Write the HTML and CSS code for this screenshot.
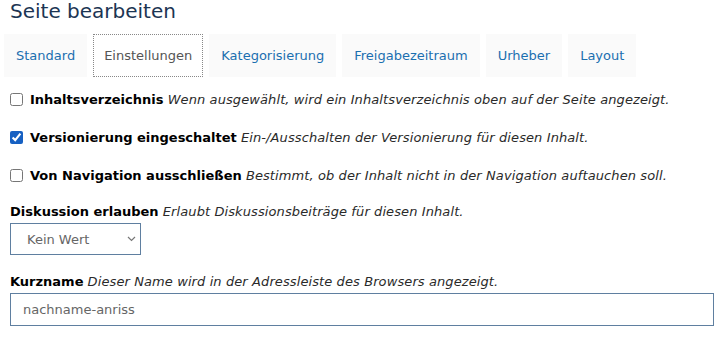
FILE: index.html
```html
<!DOCTYPE html>
<html lang="de">
<head>
  <meta charset="UTF-8">
  <title>Seite bearbeiten</title>
  <link rel="stylesheet" href="styles.css">
</head>
<body>
  <div class="page">
    <h1 class="title">Seite bearbeiten</h1>

    <nav class="tabs">
      <a class="tab" href="#">Standard</a>
      <a class="tab active" href="#">Einstellungen</a>
      <a class="tab" href="#">Kategorisierung</a>
      <a class="tab" href="#">Freigabezeitraum</a>
      <a class="tab" href="#">Urheber</a>
      <a class="tab" href="#">Layout</a>
    </nav>

    <form class="settings">
      <label class="check-row">
        <input type="checkbox">
        <span><b>Inhaltsverzeichnis</b> <i>Wenn ausgewählt, wird ein Inhaltsverzeichnis oben auf der Seite angezeigt.</i></span>
      </label>
      <label class="check-row">
        <input type="checkbox" checked>
        <span><b>Versionierung eingeschaltet</b> <i>Ein-/Ausschalten der Versionierung für diesen Inhalt.</i></span>
      </label>
      <label class="check-row">
        <input type="checkbox">
        <span><b>Von Navigation ausschließen</b> <i>Bestimmt, ob der Inhalt nicht in der Navigation auftauchen soll.</i></span>
      </label>

      <div class="field">
        <label for="discussion"><b>Diskussion erlauben</b> <i>Erlaubt Diskussionsbeiträge für diesen Inhalt.</i></label>
        <div class="select-wrap">
          <select id="discussion">
            <option>Kein Wert</option>
            <option>Ja</option>
            <option>Nein</option>
          </select>
          <svg class="chevron" width="9" height="6" viewBox="0 0 9 6"><path d="M1 1l3.5 3.5L8 1" fill="none" stroke="#777" stroke-width="1.2"/></svg>
        </div>
      </div>

      <div class="field">
        <label for="shortname"><b>Kurzname</b> <i>Dieser Name wird in der Adressleiste des Browsers angezeigt.</i></label>
        <input type="text" id="shortname" class="text-input" value="nachname-anriss">
      </div>
    </form>
  </div>
</body>
</html>
```

FILE: styles.css
```css
* {
  margin: 0;
  padding: 0;
  box-sizing: border-box;
}

body {
  font-family: Verdana, "DejaVu Sans", sans-serif;
  font-size: 13px;
  color: #111;
  background: #fff;
}

.page {
  padding: 0 12px 0 10px;
}

.title {
  font-size: 20px;
  font-weight: 400;
  color: #1c3553;
  line-height: 22px;
}

.tabs {
  display: flex;
  gap: 6px;
  margin: 12px 0 0 -6px;
}

.tab {
  display: block;
  padding: 0 12px;
  height: 43px;
  line-height: 43px;
  background: #fafafa;
  color: #1a6fb0;
  text-decoration: none;
}

.tab.active {
  padding: 0 11px;
  color: #555;
  background: #fff;
  outline: 1px dotted #888;
  outline-offset: -1px;
}

.settings {
  display: flex;
  flex-direction: column;
  margin-top: 3px;
}

.check-row {
  display: flex;
  align-items: center;
  gap: 7px;
  height: 38px;
}

.check-row input {
  width: 13px;
  height: 13px;
  accent-color: #1660c2;
}

b {
  font-weight: 700;
  color: #000;
}

i {
  color: #2a2a2a;
  letter-spacing: 0.1px;
}

.field {
  margin-top: 10px;
}

.field label {
  display: block;
  margin-bottom: 4px;
}

.select-wrap {
  position: relative;
  width: 131px;
  margin-bottom: 9px;
}

select {
  appearance: none;
  width: 100%;
  height: 32px;
  padding: 0 16px;
  border: 1px solid #5f7fa0;
  border-radius: 0;
  background: #fff;
  color: #666;
  font: inherit;
}

.chevron {
  position: absolute;
  right: 5px;
  top: 13px;
  pointer-events: none;
}

.text-input {
  width: 100%;
  height: 33px;
  padding: 0 12px;
  border: 1px solid #5f7fa0;
  border-radius: 0;
  color: #666;
  font: inherit;
}
```
